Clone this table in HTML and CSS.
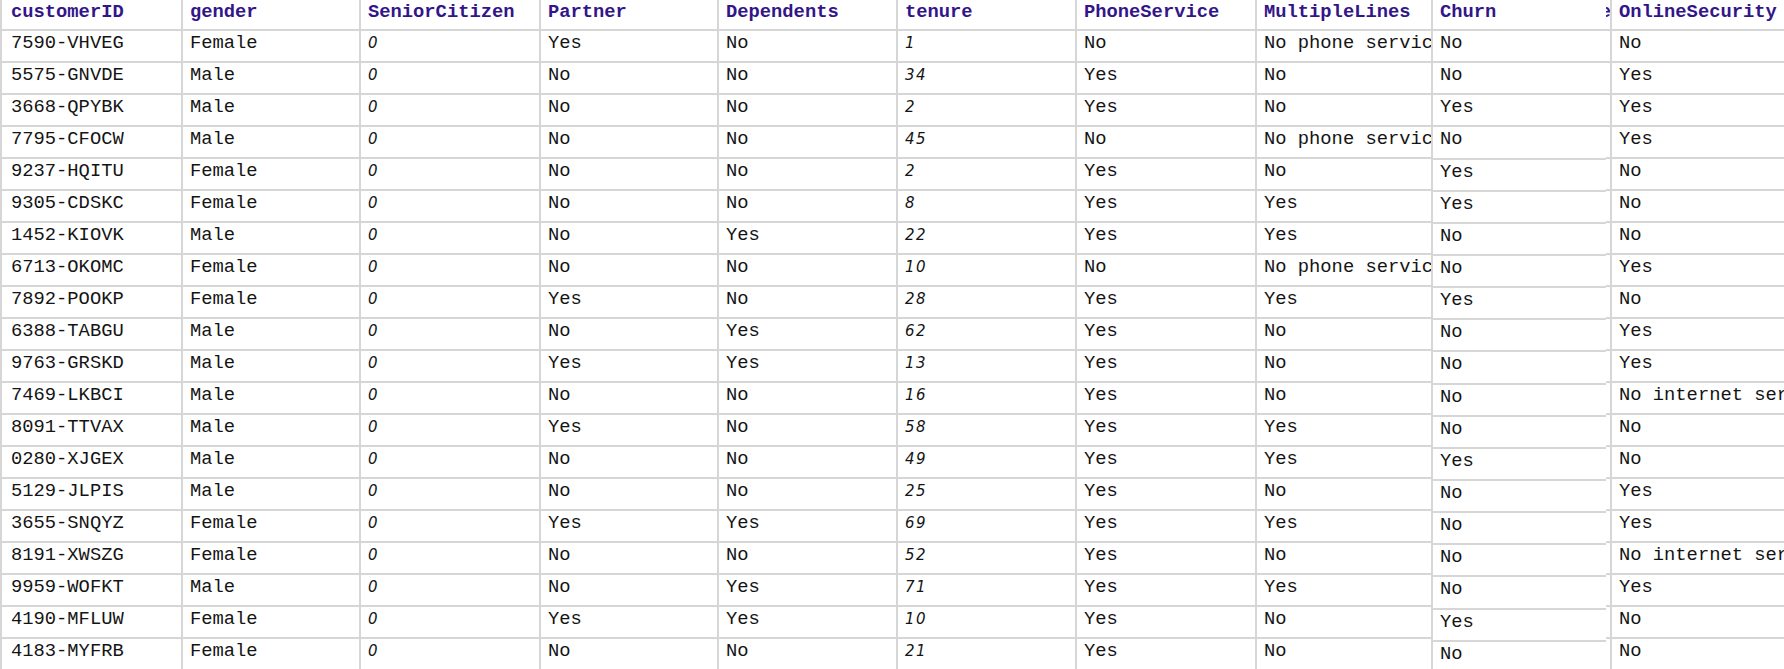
FILE: index.html
```html
<!DOCTYPE html>
<html>
<head>
<meta charset="utf-8">
<link rel="stylesheet" href="styles.css">
</head>
<body>
<div class="viewport">
<table class="data">
<colgroup>
<col class="c1"><col class="c2"><col class="c3"><col class="c4"><col class="c5"><col class="c6"><col class="c7"><col class="c8"><col class="c9"><col class="c10"><col class="c11">
</colgroup>
<thead>
<tr><th class="first">customerID</th><th>gender</th><th>SeniorCitizen</th><th>Partner</th><th>Dependents</th><th>tenure</th><th>PhoneService</th><th>MultipleLines</th><th>InternetService</th><th>OnlineSecurity</th><th>OnlineBackup</th></tr>
</thead>
<tbody>
<tr><td class="first">7590-VHVEG</td><td>Female</td><td class="num">0</td><td>Yes</td><td>No</td><td class="num">1</td><td>No</td><td>No phone service</td><td>DSL</td><td>No</td><td>Yes</td></tr>
<tr><td class="first">5575-GNVDE</td><td>Male</td><td class="num">0</td><td>No</td><td>No</td><td class="num">34</td><td>Yes</td><td>No</td><td>DSL</td><td>Yes</td><td>No</td></tr>
<tr><td class="first">3668-QPYBK</td><td>Male</td><td class="num">0</td><td>No</td><td>No</td><td class="num">2</td><td>Yes</td><td>No</td><td>DSL</td><td>Yes</td><td>Yes</td></tr>
<tr><td class="first">7795-CFOCW</td><td>Male</td><td class="num">0</td><td>No</td><td>No</td><td class="num">45</td><td>No</td><td>No phone service</td><td>DSL</td><td>Yes</td><td>No</td></tr>
<tr><td class="first">9237-HQITU</td><td>Female</td><td class="num">0</td><td>No</td><td>No</td><td class="num">2</td><td>Yes</td><td>No</td><td>Fiber optic</td><td>No</td><td>No</td></tr>
<tr><td class="first">9305-CDSKC</td><td>Female</td><td class="num">0</td><td>No</td><td>No</td><td class="num">8</td><td>Yes</td><td>Yes</td><td>Fiber optic</td><td>No</td><td>No</td></tr>
<tr><td class="first">1452-KIOVK</td><td>Male</td><td class="num">0</td><td>No</td><td>Yes</td><td class="num">22</td><td>Yes</td><td>Yes</td><td>Fiber optic</td><td>No</td><td>Yes</td></tr>
<tr><td class="first">6713-OKOMC</td><td>Female</td><td class="num">0</td><td>No</td><td>No</td><td class="num">10</td><td>No</td><td>No phone service</td><td>DSL</td><td>Yes</td><td>No</td></tr>
<tr><td class="first">7892-POOKP</td><td>Female</td><td class="num">0</td><td>Yes</td><td>No</td><td class="num">28</td><td>Yes</td><td>Yes</td><td>Fiber optic</td><td>No</td><td>No</td></tr>
<tr><td class="first">6388-TABGU</td><td>Male</td><td class="num">0</td><td>No</td><td>Yes</td><td class="num">62</td><td>Yes</td><td>No</td><td>DSL</td><td>Yes</td><td>Yes</td></tr>
<tr><td class="first">9763-GRSKD</td><td>Male</td><td class="num">0</td><td>Yes</td><td>Yes</td><td class="num">13</td><td>Yes</td><td>No</td><td>DSL</td><td>Yes</td><td>No</td></tr>
<tr><td class="first">7469-LKBCI</td><td>Male</td><td class="num">0</td><td>No</td><td>No</td><td class="num">16</td><td>Yes</td><td>No</td><td>No</td><td>No internet service</td><td>No internet service</td></tr>
<tr><td class="first">8091-TTVAX</td><td>Male</td><td class="num">0</td><td>Yes</td><td>No</td><td class="num">58</td><td>Yes</td><td>Yes</td><td>Fiber optic</td><td>No</td><td>No</td></tr>
<tr><td class="first">0280-XJGEX</td><td>Male</td><td class="num">0</td><td>No</td><td>No</td><td class="num">49</td><td>Yes</td><td>Yes</td><td>Fiber optic</td><td>No</td><td>Yes</td></tr>
<tr><td class="first">5129-JLPIS</td><td>Male</td><td class="num">0</td><td>No</td><td>No</td><td class="num">25</td><td>Yes</td><td>No</td><td>Fiber optic</td><td>Yes</td><td>No</td></tr>
<tr><td class="first">3655-SNQYZ</td><td>Female</td><td class="num">0</td><td>Yes</td><td>Yes</td><td class="num">69</td><td>Yes</td><td>Yes</td><td>DSL</td><td>Yes</td><td>Yes</td></tr>
<tr><td class="first">8191-XWSZG</td><td>Female</td><td class="num">0</td><td>No</td><td>No</td><td class="num">52</td><td>Yes</td><td>No</td><td>No</td><td>No internet service</td><td>No internet service</td></tr>
<tr><td class="first">9959-WOFKT</td><td>Male</td><td class="num">0</td><td>No</td><td>Yes</td><td class="num">71</td><td>Yes</td><td>Yes</td><td>Fiber optic</td><td>Yes</td><td>No</td></tr>
<tr><td class="first">4190-MFLUW</td><td>Female</td><td class="num">0</td><td>Yes</td><td>Yes</td><td class="num">10</td><td>Yes</td><td>No</td><td>DSL</td><td>No</td><td>No</td></tr>
<tr><td class="first">4183-MYFRB</td><td>Female</td><td class="num">0</td><td>No</td><td>No</td><td class="num">21</td><td>Yes</td><td>No</td><td>Fiber optic</td><td>No</td><td>No</td></tr>
</tbody>
</table>

<div class="sticky-col">
<table class="churn">
<thead><tr><th>Churn</th></tr></thead>
<tbody>
<tr><td>No</td></tr>
<tr><td>No</td></tr>
<tr><td>Yes</td></tr>
<tr><td>No</td></tr>
<tr><td>Yes</td></tr>
<tr><td>Yes</td></tr>
<tr><td>No</td></tr>
<tr><td>No</td></tr>
<tr><td>Yes</td></tr>
<tr><td>No</td></tr>
<tr><td>No</td></tr>
<tr><td>No</td></tr>
<tr><td>No</td></tr>
<tr><td>Yes</td></tr>
<tr><td>No</td></tr>
<tr><td>No</td></tr>
<tr><td>No</td></tr>
<tr><td>No</td></tr>
<tr><td>Yes</td></tr>
<tr><td>No</td></tr>
</tbody>
</table>
</div>
</div>
</body>
</html>
```

FILE: styles.css
```css
html, body {
  margin: 0;
  padding: 0;
  background: #ffffff;
  overflow: hidden;
}

.viewport {
  position: relative;
  width: 1784px;
  height: 669px;
  overflow: hidden;
}

.data,
.churn {
  border-collapse: separate;
  border-spacing: 0;
  table-layout: fixed;
  border-left: 2px solid #d6d6d6;
  font-family: "Liberation Mono", "Courier New", monospace;
  font-size: 18.8px;
  color: #141414;
}

.data {
  width: 1970px;
}

.c1 { width: 181px; }
.c2 { width: 178px; }
.c3 { width: 180px; }
.c4 { width: 178px; }
.c5 { width: 179px; }
.c6 { width: 179px; }
.c7 { width: 180px; }
.c8 { width: 178px; }
.c9 { width: 177px; }
.c10 { width: 179px; }
.c11 { width: 179px; }

.data th,
.data td,
.churn th,
.churn td {
  border-right: 2px solid #d6d6d6;
  border-bottom: 2px solid #d6d6d6;
  padding: 0 0 0 7px;
  line-height: 24px;
  vertical-align: top;
  white-space: nowrap;
  overflow: hidden;
  text-align: left;
}

.data th,
.churn th {
  font-weight: bold;
  color: #33158a;
}

.data .first {
  padding-left: 9px;
}

.data thead tr { height: 31px; }
.data tbody tr { height: 32px; }

.data td.num {
  font-family: "DejaVu Sans", "Liberation Sans", sans-serif;
  font-style: italic;
  font-size: 15px;
  letter-spacing: 1.5px;
}

.sticky-col {
  position: absolute;
  left: 1431px;
  top: 0;
  width: 175px;
  background: #ffffff;
}

.churn {
  width: 175px;
  background: #ffffff;
}

.churn th,
.churn td {
  border-right: none;
}

.churn thead tr { height: 31px; }
.churn tbody tr { height: 32.15px; }
```
